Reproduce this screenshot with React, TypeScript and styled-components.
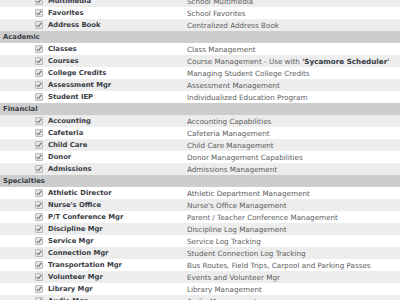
import styled, { createGlobalStyle } from "styled-components";

const GlobalStyle = createGlobalStyle`
  html, body {
    margin: 0;
    padding: 0;
    background: #ffffff;
    overflow: hidden;
  }
`;

type Module = { name: string; desc: string; highlight?: string };
type Section = { title?: string; modules: Module[] };

const sections: Section[] = [
  {
    modules: [
      { name: "Multimedia", desc: "School Multimedia" },
      { name: "Favorites", desc: "School Favorites" },
      { name: "Address Book", desc: "Centralized Address Book" },
    ],
  },
  {
    title: "Academic",
    modules: [
      { name: "Classes", desc: "Class Management" },
      {
        name: "Courses",
        desc: "Course Management - Use with ",
        highlight: "'Sycamore Scheduler'",
      },
      { name: "College Credits", desc: "Managing Student College Credits" },
      { name: "Assessment Mgr", desc: "Assessment Management" },
      { name: "Student IEP", desc: "Individualized Education Program" },
    ],
  },
  {
    title: "Financial",
    modules: [
      { name: "Accounting", desc: "Accounting Capabilities" },
      { name: "Cafeteria", desc: "Cafeteria Management" },
      { name: "Child Care", desc: "Child Care Management" },
      { name: "Donor", desc: "Donor Management Capabilities" },
      { name: "Admissions", desc: "Admissions Management" },
    ],
  },
  {
    title: "Specialties",
    modules: [
      { name: "Athletic Director", desc: "Athletic Department Management" },
      { name: "Nurse's Office", desc: "Nurse's Office Management" },
      { name: "P/T Conference Mgr", desc: "Parent / Teacher Conference Management" },
      { name: "Discipline Mgr", desc: "Discipline Log Management" },
      { name: "Service Mgr", desc: "Service Log Tracking" },
      { name: "Connection Mgr", desc: "Student Connection Log Tracking" },
      {
        name: "Transportation Mgr",
        desc: "Bus Routes, Field Trips, Carpool and Parking Passes",
      },
      { name: "Volunteer Mgr", desc: "Events and Volunteer Mgr" },
      { name: "Library Mgr", desc: "Library Management" },
      { name: "Audio Mgr", desc: "Audio Management" },
    ],
  },
];

const Page = styled.div`
  margin-top: -5px;
  font-family: "DejaVu Sans", Verdana, sans-serif;
  font-size: 6.8px;
`;

const HeaderRow = styled.div`
  height: 12px;
  display: flex;
  align-items: center;
  padding-left: 3px;
  background: #cdcdcd;
  color: #383c44;
  font-weight: bold;
`;

const Row = styled.div<{ $shaded: boolean }>`
  height: 12px;
  display: grid;
  grid-template-columns: 48px 139px 1fr;
  align-items: center;
  background: ${(p) => (p.$shaded ? "#ededed" : "#ffffff")};
`;

const CheckCell = styled.div`
  display: flex;
  align-items: center;
  padding-left: 35px;
`;

const Box = styled.span`
  width: 6px;
  height: 6px;
  border: 1px solid #bcbcbc;
  border-radius: 1px;
  background: #e2e2e2;
  display: flex;
  align-items: center;
  justify-content: center;
`;

const Name = styled.div`
  font-weight: bold;
  color: #383c44;
  white-space: nowrap;
`;

const Desc = styled.div`
  color: #5c5c5c;
  font-size: 7.2px;
  white-space: nowrap;
`;

const Strong = styled.span`
  font-weight: bold;
  color: #383c44;
`;

const Check = () => (
  <svg width="6" height="6" viewBox="0 0 6 6">
    <path d="M0.8 3.2 L2.4 4.8 L5.3 0.9" fill="none" stroke="#4a4a4a" strokeWidth="1" />
  </svg>
);

export default function App() {
  let idx = 0;
  return (
    <>
      <GlobalStyle />
      <Page>
        {sections.map((s, si) => (
          <div key={si}>
            {s.title && <HeaderRow>{s.title}</HeaderRow>}
            {s.modules.map((m) => {
              const shaded = idx % 2 === 0;
              idx++;
              return (
                <Row key={m.name} $shaded={shaded}>
                  <CheckCell>
                    <Box>
                      <Check />
                    </Box>
                  </CheckCell>
                  <Name>{m.name}</Name>
                  <Desc>
                    {m.desc}
                    {m.highlight && <Strong>{m.highlight}</Strong>}
                  </Desc>
                </Row>
              );
            })}
          </div>
        ))}
      </Page>
    </>
  );
}
